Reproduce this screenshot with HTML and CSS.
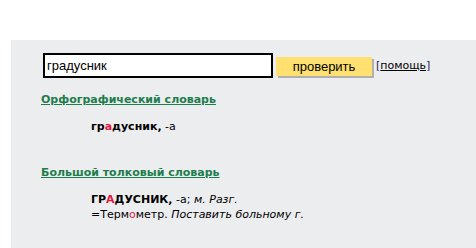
FILE: index.html
```html
<!DOCTYPE html>
<html lang="ru">
<head>
    <meta charset="UTF-8">
    <title>Проверка слова</title>
    <link rel="stylesheet" href="styles.css">
</head>
<body>
    <div class="page">
        <form class="check-form" action="check" method="get">
            <input type="text" name="word" class="word-input" value="градусник">
            <button type="submit" class="check-button">проверить</button>
            <span class="help">[<a href="help">помощь</a>]</span>
        </form>

        <div class="dict">
            <a href="#" class="dict-title">Орфографический словарь</a>
            <div class="entry">
                <b>гр<span class="accent">а</span>дусник,</b> -а
            </div>
        </div>

        <div class="dict">
            <a href="#" class="dict-title">Большой толковый словарь</a>
            <div class="entry">
                <b>ГР<span class="accent">А</span>ДУСНИК,</b> -а; <i>м. Разг.</i><br>
                =Терм<span class="accent">о</span>метр. <i>Поставить больному г.</i>
            </div>
        </div>
    </div>
</body>
</html>
```

FILE: styles.css
```css
* {
    margin: 0;
    padding: 0;
    box-sizing: border-box;
}

body {
    background-color: #ffffff;
    font-family: 'DejaVu Sans', Verdana, sans-serif;
    font-size: 11px;
    color: #000000;
    padding-top: 40px;
    padding-left: 11px;
}

.page {
    background-color: #ecedef;
    min-height: 208px;
    padding: 13px 0 20px 30px;
}

.check-form {
    display: flex;
    align-items: center;
    margin-left: 2px;
}

.word-input {
    flex: none;
    width: 230px;
    height: 25px;
    border: 2px solid #000000;
    padding: 0 2px;
    font-family: 'Liberation Sans', Arial, sans-serif;
    font-size: 13px;
    color: #000000;
    background-color: #ffffff;
    outline: none;
}

.check-button {
    flex: none;
    width: 96px;
    height: 19px;
    margin: 2px 0 0 3px;
    background-color: #ffe070;
    border: none;
    box-shadow: 2px 2px 0 #b0b0b0;
    font-family: 'Liberation Sans', Arial, sans-serif;
    font-size: 13px;
    color: #000000;
    cursor: pointer;
}

.help {
    margin-left: 4px;
    font-size: 11px;
    color: #1a2a5a;
}

.help a {
    color: #000000;
}

.dict {
    margin-top: 15px;
}

.dict + .dict {
    margin-top: 32px;
}

.dict-title {
    font-weight: bold;
    color: #1e7d4c;
}

.entry {
    margin: 13px 0 0 50px;
    line-height: 15px;
}

.accent {
    color: #e8173d;
}
```
